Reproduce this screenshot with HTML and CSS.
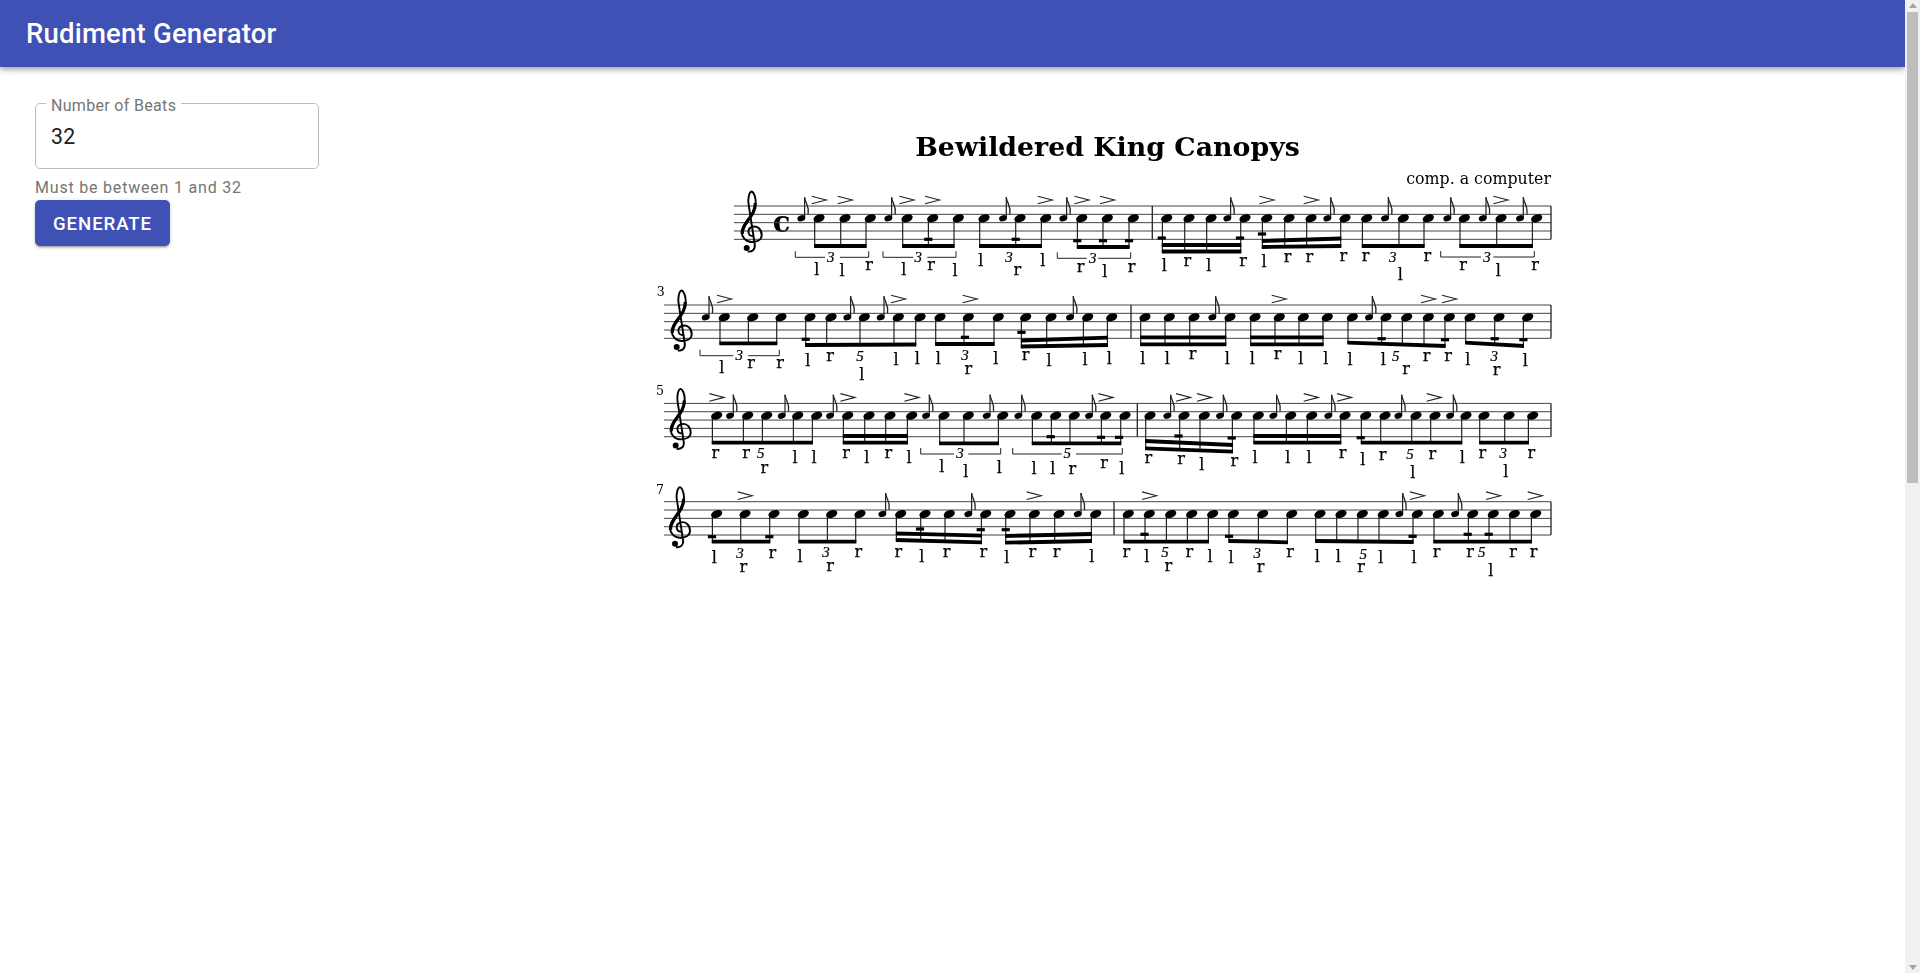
FILE: index.html
```html
<!DOCTYPE html>
<html lang="en">
<head>
    <meta charset="UTF-8">
    <meta name="viewport" content="width=device-width, initial-scale=1.0">
    <title>Rudiment Generator</title>
    <link rel="stylesheet" href="styles.css">
</head>
<body>
    <header class="app-bar">
        <h1>Rudiment Generator</h1>
    </header>

    <main class="page">
        <form class="controls">
            <div class="field">
                <label for="beats">Number of Beats</label>
                <input type="text" id="beats" value="32">
            </div>
            <p class="helper">Must be between 1 and 32</p>
            <button type="button">Generate</button>
        </form>

        <svg id="score" class="score" viewBox="650 120 910 500" width="910" height="500"></svg>
    </main>

    <div class="scrollbar" aria-hidden="true">
        <span class="arrow-up"></span>
        <div class="scroll-track">
            <div class="scroll-thumb"></div>
        </div>
        <span class="arrow-down"></span>
    </div>

    <script src="score.js"></script>
</body>
</html>
```

FILE: styles.css
```css
body {
    font-family: Roboto, sans-serif;
    background-color: #fff;
    margin: 0;
    padding-right: 15px;
}
.app-bar {
    position: relative;
    display: flex;
    align-items: center;
    height: 67px;
    padding: 0 26px;
    background-color: #3f51b5;
    color: #fff;
    box-shadow: 0 2px 4px -1px rgba(0,0,0,0.2), 0 4px 5px rgba(0,0,0,0.14), 0 1px 10px rgba(0,0,0,0.12);
}
.app-bar h1 {
    margin: 0;
    font-size: 27.5px;
    font-weight: 500;
    letter-spacing: 0.0075em;
}
.page {
    display: flex;
    align-items: flex-start;
    height: 1879px;
    box-sizing: border-box;
    padding: 36px 0 0 35px;
}
.controls {
    flex: 0 0 284px;
}
.field {
    position: relative;
    height: 66px;
    box-sizing: border-box;
    border: 1px solid #bcbcbc;
    border-radius: 5px;
}
.field label {
    position: absolute;
    top: -8px;
    left: 10px;
    padding: 0 5px;
    background-color: #fff;
    color: #757575;
    font-size: 16px;
    line-height: 19px;
    letter-spacing: 0.02em;
}
.field input {
    display: block;
    width: 100%;
    height: 100%;
    box-sizing: border-box;
    padding: 0 15px;
    border: none;
    outline: none;
    background: none;
    color: #212121;
    font-family: Roboto, sans-serif;
    font-size: 21.3px;
    letter-spacing: 0.01em;
}
.helper {
    margin: 9px 0 3px;
    color: #757575;
    font-size: 16px;
    line-height: 19px;
    letter-spacing: 0.05em;
}
button {
    display: block;
    width: 135px;
    height: 46px;
    padding: 1px 0 0;
    border: none;
    border-radius: 5px;
    background-color: #3f51b5;
    color: #fff;
    font-family: Roboto, sans-serif;
    font-size: 18.6px;
    font-weight: 500;
    letter-spacing: 0.05em;
    text-transform: uppercase;
    cursor: pointer;
    box-shadow: 0 3px 1px -2px rgba(0,0,0,0.2), 0 2px 2px rgba(0,0,0,0.14), 0 1px 5px rgba(0,0,0,0.12);
}
.score {
    display: block;
    flex: none;
    margin: 17px 0 0 331px;
    filter: blur(0.3px);
}
.score text {
    fill: #000;
    font-family: "DejaVu Serif", serif;
}
.score .title {
    font-size: 26.8px;
    font-weight: bold;
    text-anchor: middle;
}
.score .composer {
    font-size: 15.8px;
    text-anchor: end;
}
.score .stroke-label {
    font-size: 16px;
    text-anchor: middle;
    stroke: #000;
    stroke-width: 0.25;
}
.score .tuplet {
    font-family: "Liberation Serif", serif;
    font-size: 15px;
    font-style: italic;
    text-anchor: middle;
    stroke: #000;
    stroke-width: 0.2;
}
.score .bar-number {
    font-size: 12.5px;
    text-anchor: middle;
}
.score .time-sig {
    font-size: 29px;
    font-weight: bold;
    text-anchor: middle;
}
.staff-line {
    stroke: #444;
    stroke-width: 1;
}
.barline {
    stroke: #222;
    stroke-width: 1.3;
}
.stem {
    stroke: #222;
    stroke-width: 1.2;
}
.accent, .flag, .bracket, .clef {
    fill: none;
    stroke: #222;
}
.accent {
    stroke-width: 1.1;
}
.flag {
    stroke-width: 1.3;
}
.bracket {
    stroke-width: 1;
}
.clef {
    stroke: #000;
    stroke-width: 1.9;
}
.clef-heavy {
    stroke-width: 3.2;
}
/* page scrollbar, headless chrome does not paint its own */
.scrollbar {
    position: fixed;
    top: 0;
    right: 0;
    bottom: 0;
    display: flex;
    flex-direction: column;
    width: 15px;
    background-color: #f1f1f1;
}
.arrow-up, .arrow-down {
    display: block;
    flex: none;
    width: 0;
    height: 0;
    margin: 3px auto 4px;
    border-left: 4px solid transparent;
    border-right: 4px solid transparent;
}
.arrow-up {
    border-bottom: 5px solid #a3a3a3;
}
.arrow-down {
    margin: 4px auto 3px;
    border-top: 5px solid #a3a3a3;
}
.scroll-track {
    flex: 1;
}
.scroll-thumb {
    height: 471px;
    margin: 0 2px;
    background-color: #bebebe;
}
```

FILE: score.js
```js
// every number below is in page pixels, the svg viewBox starts at 650,120
const STEM_OFFSET = 4.3;

const staves = [
    {
        top: 206, left: 734, clef: 751.7, bars: [1152.3],
        accents: [819, 845, 906.7, 932.3, 1045, 1081.7, 1107.3, 1266.7, 1311, 1500.7],
        groups: [
            { n: [819, 845, 870.3], g: [801.3], b: [[246, 246]] },
            { n: [907, 932.7, 958.3], g: [888.3], b: [[246, 246]], m: [[928.3, 239.3]] },
            { n: [984, 1020, 1045.7], g: [1003], b: [[246, 246]], m: [[1015.7, 239.3]] },
            { n: [1081.7, 1107.3, 1133.3], g: [1063.3], b: [[247, 247]], m: [[1077.3, 240.7], [1103, 240.7], [1129, 240.7]] },
            { n: [1166.7, 1189, 1211, 1245], g: [1227.3], b: [[245, 245], [251.5, 251.5]], m: [[1161.7, 238], [1240, 238]] },
            { n: [1266.7, 1289, 1311, 1345], g: [1327.3], b: [[241, 238.5], [247, 246]], m: [[1262, 234]] },
            { n: [1366.7, 1403.3, 1428.3], g: [1385], b: [[246, 246]] },
            { n: [1464.3, 1501, 1536.7], g: [1447.3, 1482.7, 1520], b: [[246, 246]] }
        ],
        brackets: [
            [795.3, 868.7, 825, 840, 257.3], [883, 956, 913.3, 927.3, 257.3],
            [1057.3, 1130.7, 1086.7, 1098.3, 258.3], [1440.7, 1534.3, 1481, 1493.3, 257]
        ],
        labels: "l 816.7 275,l 842 276,r 869 270,l 903.7 275,r 931 270,l 955 276,l 980.7 265.7,r 1017.3 275,l 1042.7 265.7,r 1080.7 272.3,l 1104.7 276.7,r 1131.7 272.3,l 1164.3 270.7,r 1187.3 265.7,l 1208.7 270.7,r 1243 265.7,l 1264 266.7,r 1287.7 261.7,r 1309.3 261.7,r 1343.3 260.7,r 1365.7 260.7,l 1400.3 280,r 1427.3 260.7,r 1463 270,l 1498.3 275.7,r 1535 270",
        tuplets: "3 830.7 261.7,3 918.3 261.7,3 1009 261.7,3 1092.7 263.3,3 1392.7 261.7,3 1487 261.7"
    },
    {
        top: 305, left: 664, clef: 681.7, number: ["3", 660.7, 296], bars: [1131],
        accents: [724.3, 898.3, 970, 1279, 1428.3, 1449.3],
        groups: [
            { n: [724.3, 752.7, 781], g: [705.7], b: [[343.3, 343.3]] },
            { n: [810, 831, 864.3, 898.3, 920], g: [847.3, 880.7], b: [[345, 344.5]], m: [[805.7, 339.3]] },
            { n: [940, 968.3, 998.3], b: [[344, 344]], m: [[965, 337.3]] },
            { n: [1025.7, 1051, 1087.7, 1111.7], g: [1070], b: [[340.5, 337.7], [346.5, 345]], m: [[1021.5, 332.3]] },
            { n: [1145, 1169.3, 1194, 1230], g: [1212.3], b: [[337.3, 337.3], [344.3, 344.3]] },
            { n: [1255, 1279.3, 1303.3, 1327.3], b: [[337.3, 337.3], [344.3, 344.3]] },
            { n: [1352.3, 1386, 1406.7, 1428.3, 1449.3], g: [1369], b: [[342.7, 346]], m: [[1381.7, 338.7], [1445, 339.7]] },
            { n: [1470, 1499, 1527.7], b: [[342.7, 346]], m: [[1494.7, 338.7], [1523.4, 339.7]] }
        ],
        brackets: [[700, 779.3, 733.3, 748.3, 355.7]],
        labels: "l 721.7 372.7,r 751 368.3,r 780 368.3,l 807.7 365.7,r 830 360.7,l 861.7 380,l 896 365,l 917.3 364,l 938.3 364,r 968.3 374,l 995.7 364,r 1025.7 360,l 1049 365.7,l 1085 365,l 1109.3 364,l 1142.7 364,l 1167.3 364,r 1192.7 359,l 1227.3 364,l 1252.3 364,r 1277.7 359,l 1300.7 364,l 1325.7 364,l 1350 365,l 1383.3 365,r 1406 374,r 1426.7 360.7,r 1448 360.7,l 1467.7 365,r 1496.7 375,l 1525.3 366",
        tuplets: "3 739.3 360,5 860 360.7,3 965 360,5 1395.7 361,3 1494.3 361"
    },
    {
        top: 403.4, left: 664, clef: 680.7, number: ["5", 660, 395], bars: [1137.3],
        accents: [716.7, 847.7, 911.7, 1105.7, 1183.3, 1204.3, 1311, 1344.3, 1434],
        groups: [
            { n: [716.7, 747.7, 766.7, 797.7, 816.7], g: [730, 781.7, 830], b: [[442.7, 442.7]] },
            { n: [847.7, 869, 890, 911.7], g: [926], b: [[436, 436], [442.7, 442.7]] },
            { n: [944, 968.3, 1002.7], g: [986.7, 1018.3], b: [[443.3, 443.3]] },
            { n: [1036.7, 1055.7, 1074.3, 1105.7, 1125], g: [1089], b: [[443.3, 443.3]], m: [[1050.7, 436.7], [1101, 437.3], [1119, 437.3]] },
            { n: [1150, 1184, 1204.3, 1236.7], g: [1167.3, 1220], b: [[441, 445], [448.3, 451.7]], m: [[1178.5, 436], [1231.7, 438]] },
            { n: [1258.3, 1290.7, 1311.7, 1345], g: [1273.3, 1328.3], b: [[436, 436], [442.7, 442.7]] },
            { n: [1365.7, 1385, 1416, 1435, 1466], g: [1398.3, 1450], b: [[442.7, 442.7]], m: [[1360.7, 437.7]] },
            { n: [1484, 1509, 1532.7], b: [[442.7, 442.7]] }
        ],
        brackets: [[920.7, 1000.7, 954, 968.3, 454], [1012.7, 1122.3, 1061.7, 1076, 454]],
        labels: "r 715.3 458.3,r 746 458.3,r 764.3 473.3,l 795 463.3,l 814 463.3,r 846 458.3,l 866.7 463.3,r 888.3 458.3,l 909 463.3,l 941.7 472.3,l 965.7 477.3,l 999.3 473.3,l 1034 474,l 1052.7 474,r 1072.3 474,r 1104 468.3,l 1121.7 474,r 1148.3 463.3,r 1181 464,l 1201.7 470,r 1234.3 465.7,l 1255 462.7,l 1287.7 462.7,l 1309 462.7,r 1342.7 458.3,l 1362.7 465,r 1382.7 460,l 1412.7 478.3,r 1432.3 459,l 1462.3 462.7,r 1482.3 458.3,l 1505.7 476.7,r 1531.3 458.3",
        tuplets: "5 760.7 458.3,3 960 458.3,5 1067.3 458.3,5 1410 459.3,3 1503.3 458.3"
    },
    {
        top: 501.7, left: 664, clef: 680, number: ["7", 660, 494.3], bars: [1114],
        accents: [745, 1034, 1149.3, 1417.3, 1493.3, 1535],
        groups: [
            { n: [716.7, 745, 774], b: [[541.7, 541.7]], m: [[712, 536.7], [769.3, 536.7]] },
            { n: [803.3, 831.7, 860], b: [[541.7, 541.7]] },
            { n: [900.7, 925, 949.3, 985.7], g: [882.3, 968.3], b: [[533.3, 535.7], [540, 542.3]], m: [[920, 529], [980.7, 529.7]] },
            { n: [1010, 1034.3, 1059, 1095.7], g: [1077.7], b: [[536, 534], [542.7, 541]], m: [[1005.7, 529.7]] },
            { n: [1128.3, 1149.3, 1170.7, 1191.7, 1212.7], b: [[541.7, 541.7]], m: [[1144.5, 534.3]] },
            { n: [1233.3, 1262.7, 1291.7], b: [[541, 542.3]], m: [[1229, 536.3]] },
            { n: [1320, 1341, 1362.3, 1383.3, 1417.3], g: [1399.3], b: [[541, 542]], m: [[1412.6, 536.3]] },
            { n: [1438.3, 1472.7, 1493.3, 1514.3, 1535.7], g: [1455], b: [[541.7, 541.7]], m: [[1467.7, 534.3], [1488.7, 534.3]] }
        ],
        labels: "l 714.3 563.3,r 743.3 572.3,r 772.3 558.3,l 800 561.7,r 830 570.7,r 858.3 556.7,r 898.3 557.3,l 921.7 561.7,r 946.7 557.3,r 983.3 557.3,l 1006.7 563.3,r 1032.3 557.3,r 1056.7 557.3,l 1091.7 561.7,r 1126.3 556.7,l 1146.7 562.3,r 1168.3 570.7,r 1189.3 556.7,l 1210 561.7,l 1231 563.3,r 1260.7 571.7,r 1290 556.7,l 1317.3 561.7,l 1338.3 561.7,r 1361 571.7,l 1380.7 563.3,l 1414 563.3,r 1436.7 556.7,r 1470 556.7,l 1490.7 575.7,r 1513 556.7,r 1533.7 556.7",
        tuplets: "3 740 558.3,3 826 557.3,5 1165 557.3,3 1257.3 558.3,5 1363.3 559,5 1481.7 557.3"
    }
];

const RIGHT_EDGE = 1551;
const BEAM_HALF = 1.9;
const svg = document.getElementById("score");

function add(tag, attrs, text) {
    const el = document.createElementNS("http://www.w3.org/2000/svg", tag);
    for (const key in attrs) {
        el.setAttribute(key, attrs[key]);
    }
    if (text) {
        el.textContent = text;
    }
    svg.appendChild(el);
    return el;
}

function head(x, y, rx, ry) {
    add("ellipse", { cx: x, cy: y, rx: rx, ry: ry, transform: `rotate(-20 ${x} ${y})` });
}

function drawClef(x, top) {
    const d = "M1 30C-4 30-5 23 0 21C5 19 10 23 10 29C10 34 5 36 0 36C-6 36-10 31-10 26C-10 16 4 10 4-4C4-9 2-14 0-14.5C-3-14-4-6-3-1L3 38C4 44 0 46-4 45.5";
    const t = `translate(${x} ${top})`;
    add("path", { class: "clef", d: d, transform: t });
    add("path", { class: "clef clef-heavy", d: "M-9.5 28C-10 16 4 11 3.6-3", transform: t });
    add("circle", { cx: x - 5, cy: top + 42, r: 3 });
}

function drawGroup(group, noteY) {
    const first = group.n[0] - STEM_OFFSET;
    const last = group.n[group.n.length - 1] - STEM_OFFSET;
    const [y1, y2] = group.b[group.b.length - 1];

    group.n.forEach(x => {
        const sx = x - STEM_OFFSET;
        const end = y1 + (y2 - y1) * (sx - first) / (last - first);
        add("line", { class: "stem", x1: sx, x2: sx, y1: noteY, y2: end + 1 });
        head(x, noteY, 5.8, 3.8);
    });

    group.b.forEach(([a, b]) => {
        add("polygon", { points: `${first - 0.6},${a - BEAM_HALF} ${last + 0.6},${b - BEAM_HALF} ${last + 0.6},${b + BEAM_HALF} ${first - 0.6},${a + BEAM_HALF}` });
    });

    (group.m || []).forEach(([x, y]) => {
        add("rect", { x: x - 4.1, y: y - 1.6, width: 8.2, height: 3.2 });
    });

    (group.g || []).forEach(x => {
        const sx = x + 3.3;
        const top = noteY - 21;
        add("line", { class: "stem", x1: sx, x2: sx, y1: noteY, y2: top });
        add("path", { class: "flag", d: `M${sx} ${top}C${sx + 0.5} ${top + 6} ${sx + 5} ${top + 8} ${sx + 3.5} ${top + 17}` });
        head(x, noteY, 4, 3);
    });
}

function drawLabels(list, cls) {
    list.split(",").forEach(item => {
        const [ch, x, y] = item.split(" ");
        add("text", { class: cls, x: x, y: y }, ch);
    });
}

add("text", { class: "title", x: 1107.5, y: 155.5 }, "Bewildered King Canopys");
add("text", { class: "composer", x: RIGHT_EDGE, y: 184 }, "comp. a computer");
add("text", { class: "time-sig", x: 781.7, y: 231.5 }, "c");

staves.forEach(staff => {
    for (let i = 0; i < 5; i++) {
        const y = staff.top + i * 8.33;
        add("line", { class: "staff-line", x1: staff.left, x2: RIGHT_EDGE, y1: y, y2: y });
    }
    const bottom = staff.top + 33.3;
    staff.bars.concat(RIGHT_EDGE).forEach(x => {
        add("line", { class: "barline", x1: x, x2: x, y1: staff.top, y2: bottom });
    });

    drawClef(staff.clef, staff.top);
    if (staff.number) {
        add("text", { class: "bar-number", x: staff.number[1], y: staff.number[2] }, staff.number[0]);
    }

    const noteY = staff.top + 12.3;
    staff.groups.forEach(group => drawGroup(group, noteY));

    staff.accents.forEach(x => {
        const y = staff.top - 6;
        add("path", { class: "accent", d: `M${x - 7.3} ${y - 3.8}L${x + 7.3} ${y}L${x - 7.3} ${y + 3.8}` });
    });

    (staff.brackets || []).forEach(([x1, x2, gap1, gap2, y]) => {
        add("path", { class: "bracket", d: `M${x1} ${y - 6}V${y}H${gap1}M${gap2} ${y}H${x2}V${y - 6}` });
    });

    drawLabels(staff.labels, "stroke-label");
    drawLabels(staff.tuplets, "tuplet");
});
```
